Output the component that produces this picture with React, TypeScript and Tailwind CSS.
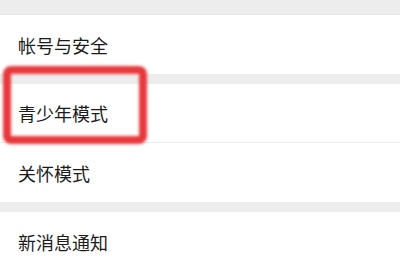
import React from "react";

const font = { fontFamily: '"Noto Sans CJK SC", "Noto Sans", sans-serif' };

function Row({ text, border }: { text: string; border?: boolean }) {
  return (
    <div className={`flex items-center h-[59px] bg-white pl-[18px] ${border ? "border-b border-[#ececec]" : ""}`}>
      <span className="text-[18px] text-[#1b1b1b] leading-none" style={font}>{text}</span>
    </div>
  );
}

export default function App() {
  return (
    <div className="relative w-[400px] h-[260px] overflow-hidden bg-[#ededed]">
      <div className="h-[15px] border-b border-[#e2e2e2]" />
      <Row text="帐号与安全" />
      <div className="h-[10px]" />
      <Row text="青少年模式" border />
      <Row text="关怀模式" />
      <div className="h-[10px]" />
      <Row text="新消息通知" />
      <div className="absolute left-[3px] top-[66px] w-[144px] h-[78px] border-[8px] border-[#e7383c] rounded-[8px] blur-[1.5px]" />
    </div>
  );
}
